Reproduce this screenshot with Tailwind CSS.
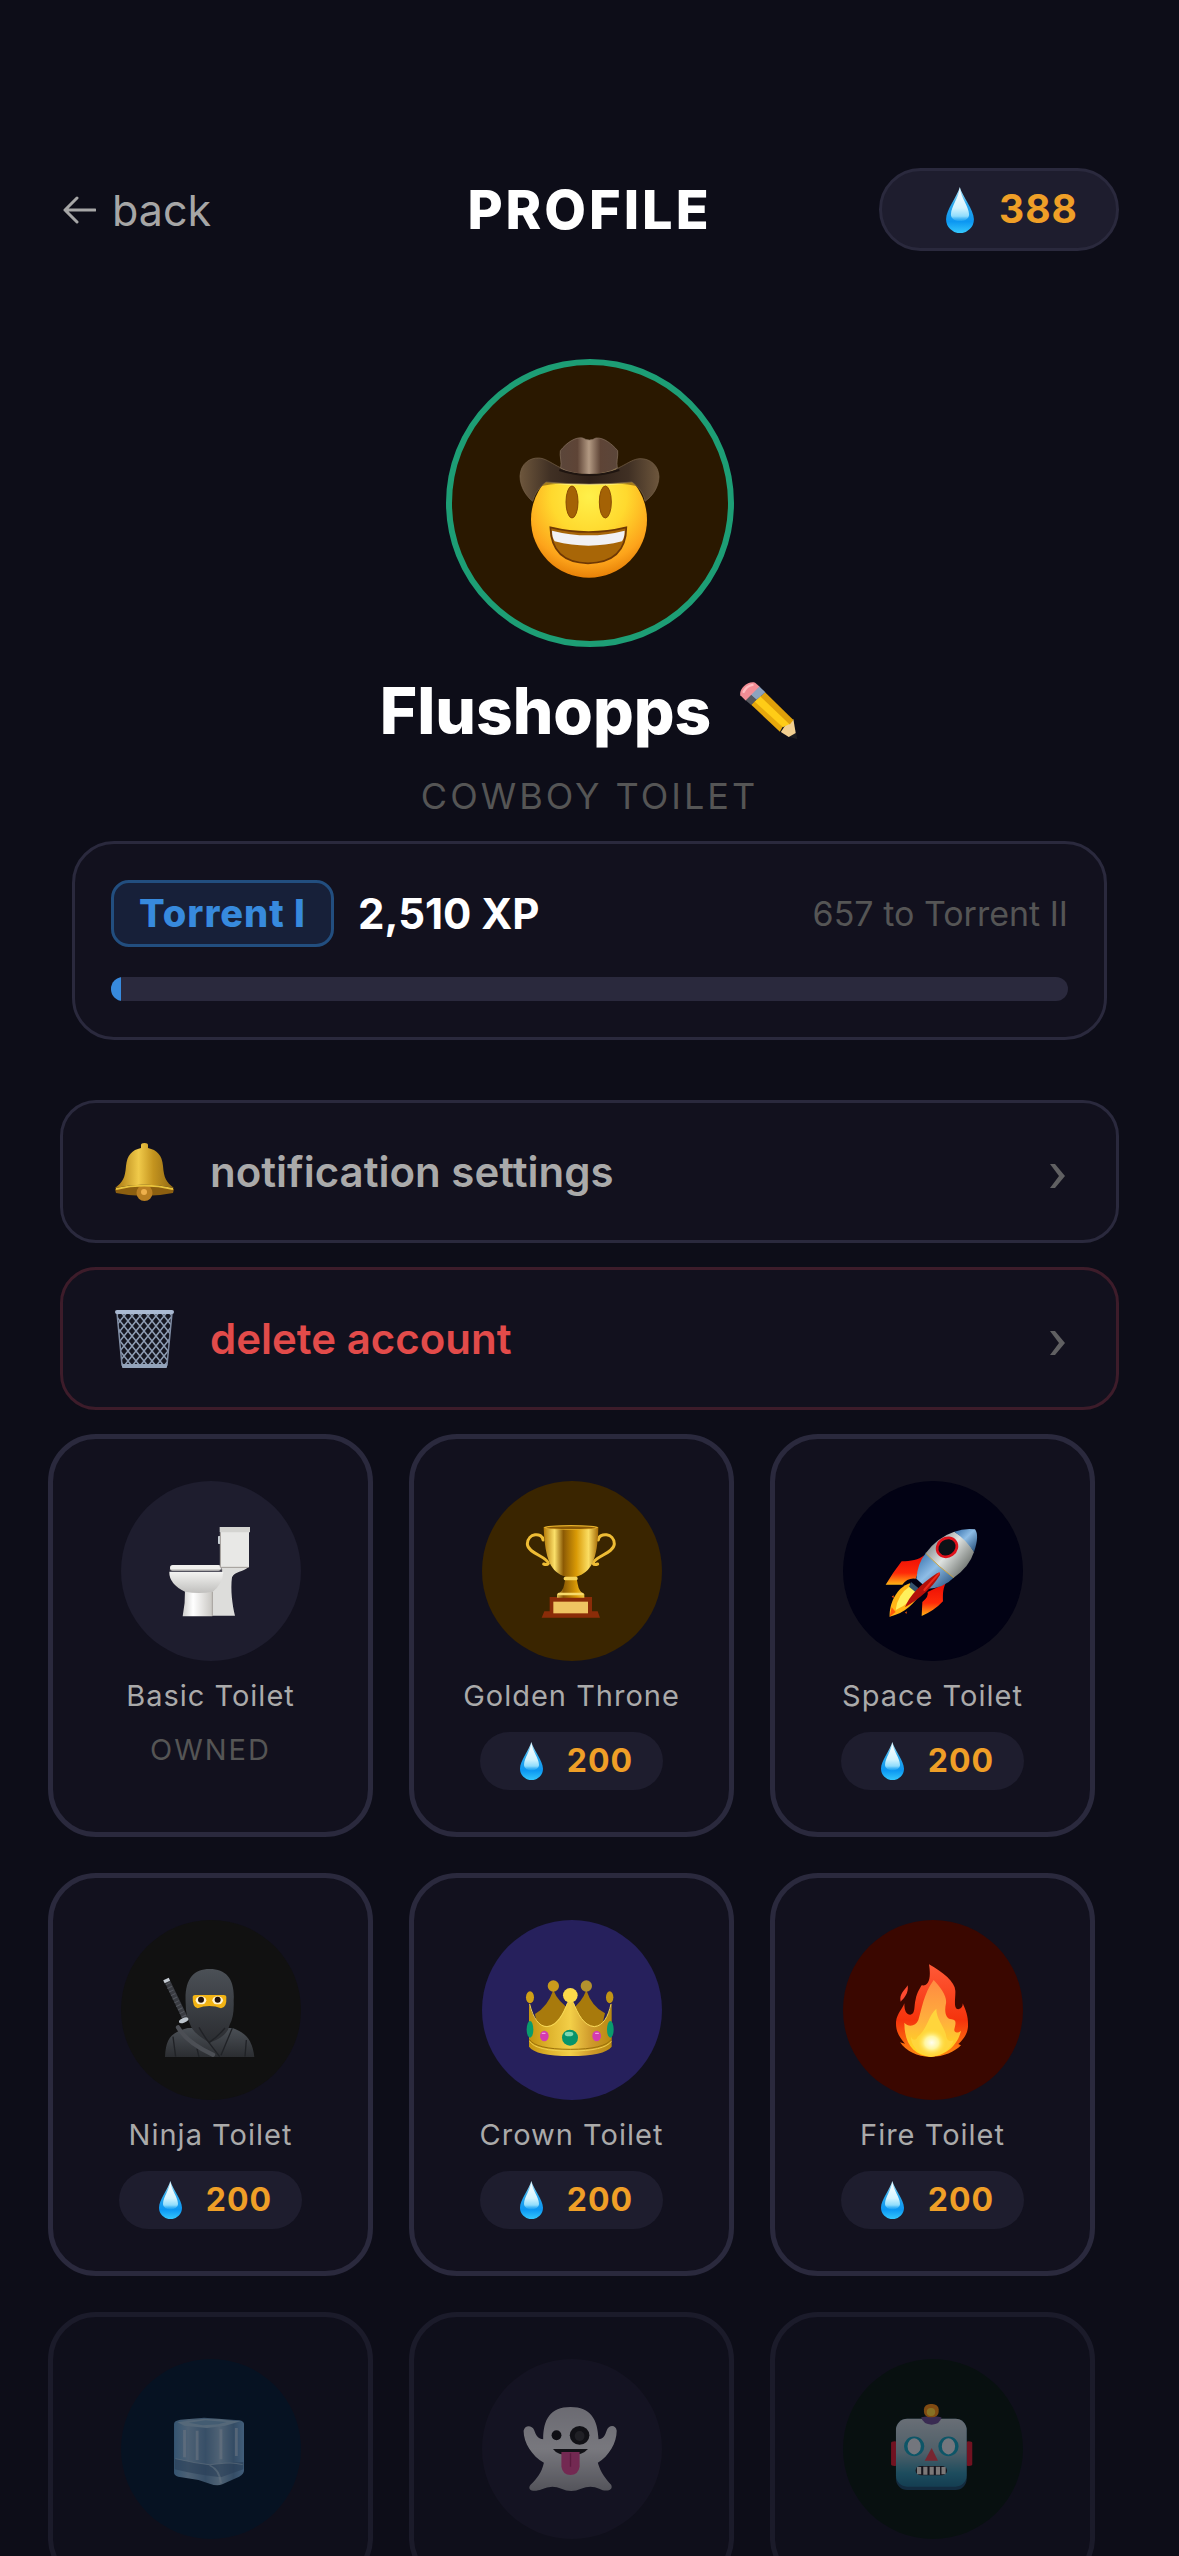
<!DOCTYPE html>
<html lang="en">
<head>
  <meta charset="UTF-8">
  <meta name="viewport" content="width=device-width, initial-scale=1">
  <title>Profile</title>
  <script src="https://cdn.jsdelivr.net/npm/@tailwindcss/browser@4"></script>
</head>
<body class="bg-[#0d0d18] h-screen overflow-hidden font-['Inter',sans-serif] text-white">

  <!-- Shared gradients and the drop icon -->
  <svg class="absolute w-0 h-0" aria-hidden="true">
    <defs>
      <linearGradient id="drop-body" x1="0" y1="0" x2="0" y2="1">
        <stop offset="0" stop-color="#c9f1fd"/><stop offset=".35" stop-color="#2fa9ea"/>
        <stop offset=".75" stop-color="#0c97f2"/><stop offset="1" stop-color="#35c8fd"/>
      </linearGradient>
      <linearGradient id="drop-shine" x1="0" y1="0" x2="0" y2="1">
        <stop offset="0" stop-color="#ffffff"/><stop offset=".6" stop-color="#d3f4fe"/>
        <stop offset=".85" stop-color="#8fdcfc"/><stop offset="1" stop-color="#3fb8f8" stop-opacity=".3"/>
      </linearGradient>
      <radialGradient id="face" cx=".5" cy=".3" r=".72">
        <stop offset="0" stop-color="#fff04a"/><stop offset=".45" stop-color="#ffd92e"/>
        <stop offset=".8" stop-color="#fda41b"/><stop offset="1" stop-color="#e47c05"/>
      </radialGradient>
      <linearGradient id="hat-brim" x1="0" y1="0" x2="1" y2="0">
        <stop offset="0" stop-color="#6d563c"/><stop offset=".22" stop-color="#403024"/>
        <stop offset=".5" stop-color="#2e2018"/><stop offset=".78" stop-color="#403024"/><stop offset="1" stop-color="#6d563c"/>
      </linearGradient>
      <linearGradient id="hat-crown" x1="0" y1="0" x2="1" y2="0">
        <stop offset="0" stop-color="#5b463a"/><stop offset=".3" stop-color="#5e4436"/>
        <stop offset=".5" stop-color="#b39a83"/><stop offset=".7" stop-color="#5e4436"/><stop offset="1" stop-color="#5b463a"/>
      </linearGradient>
      <linearGradient id="gold" x1="0" y1="0" x2="1" y2="0">
        <stop offset="0" stop-color="#b57a08"/><stop offset=".2" stop-color="#fbe06a"/><stop offset=".36" stop-color="#8c5a04"/>
        <stop offset=".6" stop-color="#d99a06"/><stop offset=".82" stop-color="#fbdd62"/><stop offset="1" stop-color="#a56a05"/>
      </linearGradient>
      <linearGradient id="bell" x1="0" y1="0" x2="1" y2="0">
        <stop offset="0" stop-color="#a8760e"/><stop offset=".4" stop-color="#f0ca4a"/>
        <stop offset=".65" stop-color="#c4941f"/><stop offset="1" stop-color="#8f6712"/>
      </linearGradient>
      <linearGradient id="porcelain" x1="0" y1="0" x2="0" y2="1">
        <stop offset="0" stop-color="#f4f4f2"/><stop offset="1" stop-color="#c0bfbd"/>
      </linearGradient>
      <linearGradient id="porcelain-foot" x1="0" y1="0" x2="1" y2="0">
        <stop offset="0" stop-color="#cfcecc"/><stop offset=".35" stop-color="#ffffff"/><stop offset="1" stop-color="#c8c6c2"/>
      </linearGradient>
      <linearGradient id="rocket-hull" gradientUnits="userSpaceOnUse" x1="505" y1="345" x2="605" y2="425">
        <stop offset="0" stop-color="#8b9193"/><stop offset=".45" stop-color="#dfe3e1"/><stop offset="1" stop-color="#777c78"/>
      </linearGradient>
      <linearGradient id="rocket-blue" x1="0" y1="0" x2="1" y2="1">
        <stop offset="0" stop-color="#2f6ba8"/><stop offset=".45" stop-color="#8ebde6"/><stop offset="1" stop-color="#1e4672"/>
      </linearGradient>
      <linearGradient id="fin" x1="0" y1="0" x2="0" y2="1">
        <stop offset="0" stop-color="#ea0c05"/><stop offset=".6" stop-color="#ff2a08"/><stop offset="1" stop-color="#ffb414"/>
      </linearGradient>
      <linearGradient id="ninja" x1="0" y1="0" x2="0" y2="1">
        <stop offset="0" stop-color="#4b5056"/><stop offset="1" stop-color="#2b2d31"/>
      </linearGradient>
      <linearGradient id="crown" x1="0" y1="0" x2="1" y2="0">
        <stop offset="0" stop-color="#c4930f"/><stop offset=".25" stop-color="#dfb42e"/><stop offset=".5" stop-color="#f3cf48"/>
        <stop offset=".75" stop-color="#cf9a2c"/><stop offset="1" stop-color="#b98a10"/>
      </linearGradient>
      <linearGradient id="flame-outer" x1="0" y1="0" x2="0" y2="1">
        <stop offset="0" stop-color="#ff5a38"/><stop offset=".6" stop-color="#f5330c"/><stop offset="1" stop-color="#ff8a10"/>
      </linearGradient>
      <linearGradient id="flame-mid" x1="0" y1="0" x2="0" y2="1">
        <stop offset="0" stop-color="#ff8a42"/><stop offset=".55" stop-color="#ffb13c"/><stop offset="1" stop-color="#ffe01c"/>
      </linearGradient>
      <radialGradient id="flame-core">
        <stop offset="0" stop-color="#fffef0"/><stop offset=".45" stop-color="#fff6a0"/><stop offset="1" stop-color="#ffd826" stop-opacity="0"/>
      </radialGradient>
      <linearGradient id="ice" x1="0" y1="0" x2="1" y2="0">
        <stop offset="0" stop-color="#5d9bca"/><stop offset=".2" stop-color="#8fb6d2"/><stop offset=".45" stop-color="#6290b6"/>
        <stop offset=".65" stop-color="#93b8d1"/><stop offset=".85" stop-color="#5c8bb2"/><stop offset="1" stop-color="#76aedb"/>
      </linearGradient>
      <linearGradient id="ghost" x1="0" y1="0" x2="0" y2="1">
        <stop offset="0" stop-color="#c9c8cc"/><stop offset=".5" stop-color="#e2e2e3"/><stop offset="1" stop-color="#9a9a9d"/>
      </linearGradient>
      <linearGradient id="robot" x1="0" y1="0" x2="0" y2="1">
        <stop offset="0" stop-color="#c4cfd3"/><stop offset=".5" stop-color="#8fb0b8"/><stop offset=".8" stop-color="#2e8ca3"/><stop offset="1" stop-color="#1b6f8c"/>
      </linearGradient>
      <pattern id="mesh" width="8" height="10" patternUnits="userSpaceOnUse">
        <path d="M0 0L8 10M8 0L0 10" stroke="#8e9db4" stroke-width="1.5"/>
      </pattern>
      <symbol id="drop" viewBox="360 942 69 114">
        <path fill="url(#drop-body)" d="M394 942C388 965 360 998 360 1022A34.500 34.500 0 0 0 429 1022C429 998 400 965 394 942Z"/>
        <path fill="url(#drop-shine)" d="M394 946C391 968 373 990 372 1010C372 1032 417 1032 417 1010C416 990 397 968 394 946Z"/>
      </symbol>
    </defs>
  </svg>

  <!-- Header -->
  <header class="mt-[168px] px-[60px] grid grid-cols-3 items-center">
    <a href="#" class="justify-self-start flex items-center gap-4 text-[43px] leading-[54px] text-[#a6a6a6]">
      <svg class="w-9 h-9" viewBox="0 0 36 36" fill="none" stroke="currentColor" stroke-width="3" stroke-linecap="round" stroke-linejoin="round" aria-hidden="true"><path d="M35 18H5M17 6L5 18L17 30"/></svg>back
    </a>
    <h1 class="justify-self-center text-[54px] leading-[60px] font-extrabold tracking-[3px]">PROFILE</h1>
    <div class="justify-self-end h-[83px] pl-16 pr-[38px] flex items-center gap-[25px] rounded-full border-3 border-[#2a293d] bg-[#1e1d2e] text-[39px] font-bold tracking-[1px] text-[#ef9f27]">
      <svg class="w-7 h-[46px]" aria-hidden="true"><use href="#drop"/></svg>388
    </div>
  </header>

  <main>
    <!-- Avatar and name -->
    <section class="mt-[108px] flex flex-col items-center">
      <div class="size-72 rounded-full border-6 border-[#1d9e75] bg-[#2a1800]">
        <svg class="size-full" viewBox="96 75 828 828" aria-label="Cowboy">
          <circle cx="507" cy="539" r="174" fill="url(#face)"/>
          <path fill="#6b4a10" opacity=".6" d="M352 440Q508 412 662 440L650 400H365Z"/>
          <path fill="#fff27a" d="M392 431H622Q508 440 392 431Z"/>
          <ellipse cx="456" cy="486" rx="18" ry="48" fill="#a46205" stroke="#8a4b04" stroke-width="3"/>
          <ellipse cx="556" cy="486" rx="18" ry="48" fill="#a46205" stroke="#8a4b04" stroke-width="3"/>
          <path fill="#a86607" stroke="#6f3804" stroke-width="5" d="M391 562Q506 590 619 562Q618 668 504 670Q394 668 391 562Z"/>
          <path fill="#f1f1f4" d="M396 572Q506 600 614 572Q614 592 606 604Q506 630 404 604Q396 592 396 572Z"/>
          <path fill="url(#hat-brim)" stroke="#7a654d" stroke-width="2" d="M338 484C318 468 300 440 300 408C302 370 330 353 356 354C392 355 420 402 508 404C596 402 624 357 660 356C690 355 716 376 717 410C716 442 698 468 675 484C672 460 655 440 636 426Q508 438 378 426C360 440 345 458 338 484Z"/>
          <path fill="url(#hat-crown)" stroke="#8a7462" stroke-width="2" d="M422 384C426 366 418 348 421 332C440 308 466 290 488 294Q508 306 528 294C552 292 576 312 593 332C595 350 588 366 592 384Q560 402 508 403Q452 402 422 384Z"/>
          <path fill="none" stroke="#1f1510" stroke-width="6" d="M418 390Q508 420 598 390"/>
        </svg>
      </div>
      <div class="mt-6 h-20 flex items-center gap-7">
        <h2 class="text-[64px] leading-20 font-extrabold">Flushopps</h2>
        <button type="button" aria-label="Edit name">
          <svg class="w-[60px] h-[60px]" viewBox="1131 60 182 182" aria-hidden="true">
            <path fill="#1c1c20" d="M1308 237L1280 228L1302 207Z"/>
            <path fill="#f2cf91" d="M1258 215L1282 230L1303 218L1296 176L1278 184Z"/>
            <path fill="#e7a80c" d="M1168 132L1255 214L1264 198L1180 118Z"/>
            <path fill="#ffcc17" d="M1178 122L1264 200L1286 190L1198 104Z"/>
            <path fill="#dfa00a" d="M1196 107L1285 192L1296 178L1210 94Z"/>
            <path fill="#56585f" d="M1150 118L1168 133L1184 117L1166 101Z"/>
            <path fill="#8da3bd" d="M1166 101L1184 117L1211 94L1192 76Z"/>
            <path fill="#f28d95" d="M1135 103C1130 84 1158 58 1180 65L1193 77L1151 119Z"/>
            <path fill="none" stroke="#ffbcc0" stroke-width="7" stroke-linecap="round" d="M1145 93Q1154 75 1172 72"/>
          </svg>
        </button>
      </div>
      <p class="mt-[21px] text-[36px] leading-12 tracking-[3px] text-[#555]">COWBOY TOILET</p>
    </section>

    <!-- XP progress -->
    <section class="mt-[21px] mx-[72px] p-9 rounded-[42px] border-3 border-[#2a293d] bg-[#12111e]">
      <div class="flex items-center">
        <span class="h-[67px] px-[25px] flex items-center rounded-[18px] border-3 border-[#224e7f] bg-[#172039] text-[38px] font-extrabold tracking-[1px] text-[#378add]">Torrent I</span>
        <span class="ml-6 text-[42px] leading-12 font-bold">2,510 XP</span>
        <span class="ml-auto text-[34px] leading-10 text-[#555]">657 to Torrent II</span>
      </div>
      <div class="mt-[30px] h-6 rounded-xl overflow-hidden bg-[#2a293d]">
        <div class="h-full bg-[#378add]" style="width: 1%"></div>
      </div>
    </section>

    <!-- Account actions -->
    <nav class="mt-[60px] mx-[60px] flex flex-col gap-6 text-[42px] font-semibold">
      <a href="#" class="h-[143px] px-12 flex items-center gap-[33px] rounded-[36px] border-3 border-[#2a293d] bg-[#12111e] text-[#aaa]">
        <svg class="size-[66px]" viewBox="111 1138 66 66" aria-hidden="true">
          <path fill="#8c5f10" d="M115 1188Q144 1179 174 1188L173 1192Q144 1198 116 1192Z"/>
          <ellipse cx="144.500" cy="1192" rx="8" ry="8" fill="#b97f22"/>
          <path fill="url(#bell)" d="M141 1144Q141 1142 144.500 1142Q148 1142 148 1144V1147C157 1149 162 1154 163 1165C164 1177 166 1181 174 1187Q144 1180 115 1187C123 1181 125 1177 126 1165C127 1154 132 1149 141 1147Z"/>
          <path fill="none" stroke="#e9c33c" stroke-width="2" d="M116 1188Q144 1181 173 1188"/>
          <circle cx="144" cy="1191" r="3" fill="#eeb04c"/>
        </svg>
        <span>notification settings</span>
        <svg class="ml-auto w-[18px] h-8" viewBox="0 0 18 32" fill="#606062" aria-hidden="true"><path d="M0 8H5L15 20L5 32H0L9 20Z"/></svg>
      </a>
      <a href="#" class="h-[143px] px-12 flex items-center gap-[33px] rounded-[36px] border-3 border-[#3d1c2a] bg-[#12111e] text-[#e24b4a]">
        <svg class="size-[66px]" viewBox="111 1305 66 66" aria-hidden="true">
          <path fill="#161722" d="M117 1312H172L167 1364H122Z"/>
          <path fill="url(#mesh)" stroke="#7f8ca3" stroke-width="1.500" d="M117 1312H172L167 1364H122Z"/>
          <rect x="115" y="1309" width="59" height="4" rx="2" fill="#a9b9d2"/>
          <rect x="122" y="1363" width="45" height="4" rx="1" fill="#93a3ba"/>
        </svg>
        <span>delete account</span>
        <svg class="ml-auto w-[18px] h-8" viewBox="0 0 18 32" fill="#606062" aria-hidden="true"><path d="M0 8H5L15 20L5 32H0L9 20Z"/></svg>
      </a>
    </nav>

    <!-- Toilet shop -->
    <section class="mt-6 pl-12 pr-[84px] grid grid-cols-3 gap-9 text-[29px] leading-9 text-[#aaa]">
      <button type="button" class="p-[42px] flex flex-col items-center rounded-[48px] border-5 border-[#2a293d] bg-[#12111e]">
        <svg class="size-45 rounded-full bg-[#1e1d2e]" viewBox="240 153 540 540" aria-hidden="true">
          <path fill="#dddddb" d="M540 412H622C606 426 582 424 573 442C568 480 574 525 582 557H512V486Q536 465 545 430Z"/>
          <path fill="#e8e8e6" d="M538 306H624V412H538Z"/>
          <path fill="#d4d4d1" d="M536 291H627V307H536Z"/>
          <rect x="531" y="318" width="7" height="24" rx="2" fill="#c9d0d6"/>
          <path fill="url(#porcelain-foot)" d="M432 480H514V559H425Q433 520 432 480Z"/>
          <path fill="url(#porcelain)" d="M385 425Q384 462 432 485Q474 493 515 485Q545 462 547 425Z"/>
          <rect x="387" y="405" width="153" height="17" rx="8" fill="#f1f0ee"/>
          <path fill="none" stroke="#8f8c88" stroke-width="2" d="M386 420H545"/>
          <path fill="none" stroke="#a5a19c" stroke-width="3" d="M514 486V558M538 308V412H622"/>
        </svg>
        <span class="mt-[17px] tracking-[1px]">Basic Toilet</span>
        <span class="mt-[18px] tracking-[2px] text-[#555]">OWNED</span>
      </button>

      <button type="button" class="p-[42px] flex flex-col items-center rounded-[48px] border-5 border-[#2a293d] bg-[#12111e]">
        <svg class="size-45 rounded-full bg-[#3a2500]" viewBox="243 153 540 540" aria-hidden="true">
          <g fill="none" stroke="#eebc34" stroke-width="9" stroke-linecap="round">
            <path d="M426 330C424 306 380 308 379 342C380 370 440 380 442 400Q438 406 428 402"/>
            <path d="M592 330C594 306 640 308 640 342C638 370 580 380 576 400Q580 406 590 402"/>
          </g>
          <path fill="#8a2c08" d="M446 501H573V544H590L597 563H422L430 544H446Z"/>
          <rect x="457" y="515" width="104" height="35" fill="#efc462"/>
          <path fill="url(#gold)" d="M428 292H592C590 390 570 428 526 440L530 462Q534 486 550 492V503H468V492Q486 486 490 462L494 440C450 428 432 390 428 292Z"/>
          <ellipse cx="510" cy="292" rx="82" ry="7" fill="#e5b02a"/>
          <ellipse cx="510" cy="293" rx="74" ry="4" fill="#8a5905"/>
          <rect x="488" y="440" width="42" height="11" rx="5" fill="#f6d45a"/>
          <rect x="470" y="488" width="78" height="8" rx="4" fill="#f7da6c"/>
        </svg>
        <span class="mt-[17px] tracking-[1px]">Golden Throne</span>
        <span class="mt-[18px] h-[58px] pl-10 pr-[30px] flex items-center gap-6 rounded-full bg-[#1e1d2e] text-[32px] font-bold tracking-[1px] text-[#ef9f27]">
          <svg class="w-[23px] h-[38px]" aria-hidden="true"><use href="#drop"/></svg>200
        </span>
      </button>

      <button type="button" class="p-[42px] flex flex-col items-center rounded-[48px] border-5 border-[#2a293d] bg-[#12111e]">
        <svg class="size-45 rounded-full bg-[#020214]" viewBox="246 153 540 540" aria-hidden="true">
          <path fill="#ffb516" d="M386 560C384 520 408 472 446 460L478 486C466 518 430 550 386 560Z"/>
          <path fill="#fff05c" d="M404 540Q410 492 448 468L466 482Q450 520 404 540Z"/>
          <path fill="#ff5a0a" d="M386 560L392 532L404 546ZM392 500l6-4v8zM432 548l5-4v7z"/>
          <path fill="url(#fin)" d="M490 376C472 390 450 394 422 394Q394 430 374 464L424 464Q440 442 464 446Z"/>
          <path fill="url(#fin)" d="M554 460C544 480 546 500 546 514Q520 542 482 558L484 516Q504 500 500 486Z"/>
          <path fill="url(#rocket-blue)" d="M494 370Q470 400 466 446L500 476Q548 474 578 443Z"/>
          <path fill="url(#rocket-hull)" d="M494 370Q528 322 580 305Q622 330 639 366Q624 412 578 443Q534 412 494 370Z"/>
          <path fill="url(#rocket-blue)" d="M580 305Q610 294 642 298Q656 316 639 366Q614 328 580 305Z"/>
          <path fill="none" stroke="#c9a33e" stroke-width="3" d="M494 370Q534 412 578 443"/>
          <path fill="#34546e" d="M450 456L472 474L466 488L444 470Z"/>
          <path fill="#b3100a" d="M432 532Q452 480 528 430Q540 424 536 436Q506 488 432 532Z"/>
          <path fill="none" stroke="#ee2a1a" stroke-width="6" stroke-linecap="round" d="M534 430Q510 456 490 480"/>
          <ellipse cx="558" cy="352" rx="31" ry="27" transform="rotate(-35 558 352)" fill="#0c1116" stroke="#e0121b" stroke-width="8"/>
        </svg>
        <span class="mt-[17px] tracking-[1px]">Space Toilet</span>
        <span class="mt-[18px] h-[58px] pl-10 pr-[30px] flex items-center gap-6 rounded-full bg-[#1e1d2e] text-[32px] font-bold tracking-[1px] text-[#ef9f27]">
          <svg class="w-[23px] h-[38px]" aria-hidden="true"><use href="#drop"/></svg>200
        </span>
      </button>

      <button type="button" class="p-[42px] flex flex-col items-center rounded-[48px] border-5 border-[#2a293d] bg-[#12111e]">
        <svg class="size-45 rounded-full bg-[#111]" viewBox="240 150 540 540" aria-hidden="true">
          <path stroke="#3a3c42" stroke-width="17" d="M380 336L432 444"/>
          <path stroke="#55585f" stroke-width="15" stroke-dasharray="3 9" d="M380 340L430 442"/>
          <path stroke="#c6ccd4" stroke-width="18" d="M375 327L379 336"/>
          <path fill="url(#ninja)" d="M372 561C374 500 396 486 440 474H574C618 490 634 512 640 561Z"/>
          <path fill="url(#ninja)" d="M434 400C430 330 455 297 506 297C558 297 582 330 578 392Q580 440 566 464Q560 500 506 518Q456 490 448 464Q434 440 434 400Z"/>
          <path fill="#f2b313" d="M455 380Q456 375 462 375H548Q556 375 556 382Q558 414 540 415Q524 408 505 408Q486 408 470 415Q454 412 455 380Z"/>
          <ellipse cx="480" cy="391" rx="16" ry="12" fill="#fff3cf"/>
          <ellipse cx="530" cy="391" rx="16" ry="12" fill="#fff3cf"/>
          <circle cx="480" cy="389" r="9" fill="#22120a"/>
          <circle cx="530" cy="389" r="9" fill="#22120a"/>
          <path fill="none" stroke="#202226" stroke-width="4" d="M474 472Q490 500 504 518Q530 500 552 474M504 518L536 560M574 474L540 556M404 560L396 500M612 560L616 510M474 561L468 536"/>
          <path fill="none" stroke="#4c4f55" stroke-width="13" stroke-linecap="round" d="M411 472Q440 520 516 554"/>
          <ellipse cx="428" cy="451" rx="15" ry="7" transform="rotate(-22 428 451)" fill="#bcc4cc"/>
        </svg>
        <span class="mt-[17px] tracking-[1px]">Ninja Toilet</span>
        <span class="mt-[18px] h-[58px] pl-10 pr-[30px] flex items-center gap-6 rounded-full bg-[#1e1d2e] text-[32px] font-bold tracking-[1px] text-[#ef9f27]">
          <svg class="w-[23px] h-[38px]" aria-hidden="true"><use href="#drop"/></svg>200
        </span>
      </button>

      <button type="button" class="p-[42px] flex flex-col items-center rounded-[48px] border-5 border-[#2a293d] bg-[#12111e]">
        <svg class="size-45 rounded-full bg-[#26205c]" viewBox="243 150 540 540" aria-hidden="true">
          <path fill="#a87a0c" d="M402 432Q440 410 457 360Q470 395 510 420Q544 395 556 360Q572 410 612 430L600 480H410Z"/>
          <circle cx="457" cy="348" r="17" fill="#c99a1c"/>
          <circle cx="556" cy="348" r="17" fill="#b4922e"/>
          <path fill="url(#crown)" d="M384 398C392 440 412 468 438 468C468 466 486 430 500 396H517C530 430 548 466 580 468C606 466 624 440 632 398L632 530Q610 558 508 558Q404 558 384 530Z"/>
          <circle cx="508" cy="376" r="22" fill="#fbd94a"/>
          <ellipse cx="387" cy="382" rx="12" ry="18" fill="#cf9f16"/>
          <ellipse cx="626" cy="382" rx="11" ry="18" fill="#c09416"/>
          <path fill="none" stroke="#f5d857" stroke-width="3" d="M386 402C396 444 414 470 438 470C470 468 488 430 500 398M517 398C530 430 548 468 580 470C606 468 622 440 630 402"/>
          <path fill="none" stroke="#9a700b" stroke-width="3" d="M385 508Q404 538 508 538Q610 538 631 508"/>
          <path fill="none" stroke="#f0d050" stroke-width="3" d="M386 514Q404 543 508 543Q610 543 631 514"/>
          <circle cx="507" cy="503" r="24" fill="#08946a"/>
          <ellipse cx="504" cy="492" rx="13" ry="7" fill="#7fd8b0"/>
          <ellipse cx="387" cy="478" rx="10" ry="25" fill="#099b6d"/>
          <ellipse cx="628" cy="478" rx="10" ry="25" fill="#099b6d"/>
          <ellipse cx="430" cy="498" rx="13" ry="16" fill="#d43bb0"/>
          <ellipse cx="587" cy="498" rx="13" ry="16" fill="#d43bb0"/>
          <path stroke="#f39be0" stroke-width="4" stroke-linecap="round" d="M424 490H432M584 490H592"/>
        </svg>
        <span class="mt-[17px] tracking-[1px]">Crown Toilet</span>
        <span class="mt-[18px] h-[58px] pl-10 pr-[30px] flex items-center gap-6 rounded-full bg-[#1e1d2e] text-[32px] font-bold tracking-[1px] text-[#ef9f27]">
          <svg class="w-[23px] h-[38px]" aria-hidden="true"><use href="#drop"/></svg>200
        </span>
      </button>

      <button type="button" class="p-[42px] flex flex-col items-center rounded-[48px] border-5 border-[#2a293d] bg-[#12111e]">
        <svg class="size-45 rounded-full bg-[#3a0700]" viewBox="246 150 540 540" aria-hidden="true">
          <path fill="#ff4a30" d="M440 346C444 370 428 386 419 395C414 372 430 362 440 346Z"/>
          <path fill="url(#flame-outer)" d="M504 283C546 306 582 336 583 362C584 386 576 418 592 418C602 416 606 408 605 400C616 424 622 440 621 470C618 500 600 514 592 522L600 526C580 546 550 560 508 561C468 560 436 544 417 517L432 521C414 500 404 484 405 456C408 430 424 418 430 400C430 424 436 434 448 434C464 432 458 410 464 388C468 368 476 356 482 346C500 350 512 330 504 283Z"/>
          <path fill="url(#flame-mid)" d="M518 330C540 354 558 378 555 400C550 422 552 446 572 448C588 450 584 460 580 478C578 490 592 490 600 482C592 520 560 556 510 560C456 556 430 520 430 458C442 472 464 470 472 450C482 420 488 370 518 330Z"/>
          <path fill="#ffd53c" d="M526 416C526 450 552 470 556 500C562 520 574 510 578 512C566 540 540 558 510 560C480 558 448 530 450 500C456 514 466 510 470 500C500 476 500 440 526 416Z"/>
          <ellipse cx="512" cy="518" rx="46" ry="42" fill="url(#flame-core)"/>
        </svg>
        <span class="mt-[17px] tracking-[1px]">Fire Toilet</span>
        <span class="mt-[18px] h-[58px] pl-10 pr-[30px] flex items-center gap-6 rounded-full bg-[#1e1d2e] text-[32px] font-bold tracking-[1px] text-[#ef9f27]">
          <svg class="w-[23px] h-[38px]" aria-hidden="true"><use href="#drop"/></svg>200
        </span>
      </button>

      <!-- Locked toilets -->
      <button type="button" disabled aria-label="Ice" class="p-[42px] flex flex-col items-center rounded-[48px] border-5 border-[#2a293d] bg-[#12111e] opacity-50">
        <svg class="size-45 rounded-full bg-[#00182d]" viewBox="242 189 540 540" aria-hidden="true">
          <g transform="scale(2.1 1)">
            <path fill="url(#ice)" d="M191 384Q191 374 200 371L234 365L284 373Q291 376 291 384V522Q291 534 284 542L260 565Q252 571 242 563L226 552L197 542Q191 538 191 530Z"/>
            <path fill="#9cc3da" d="M196 379L234 368L286 376L264 389L238 396L206 389Z"/>
            <path fill="#6b9fc4" opacity=".7" d="M212 380L236 373L266 378L254 385L232 388Z"/>
            <path fill="#456f95" opacity=".6" d="M192 488Q216 498 240 506Q266 500 290 498V520L258 544Q222 536 192 520Z"/>
            <path fill="none" stroke="#b5d3e5" stroke-width="3" opacity=".6" d="M193 488Q216 500 242 506L262 502M242 508Q256 520 258 562M262 502Q276 498 289 506"/>
            <path fill="none" stroke="#c4dbe9" stroke-width="4" opacity=".6" d="M206 402V484M224 404V492M258 400V490M280 396V480"/>
          </g>
        </svg>
      </button>
      <button type="button" disabled aria-label="Ghost" class="p-[42px] flex flex-col items-center rounded-[48px] border-5 border-[#2a293d] bg-[#12111e] opacity-50">
        <svg class="size-45 rounded-full bg-[#1c1a2c]" viewBox="1320 189 540 540" aria-hidden="true">
          <g transform="scale(2.1 1)">
            <path fill="url(#ghost)" d="M717 500C700 480 688 440 688 404C690 386 700 388 703 402C706 420 709 428 716 430C716 370 726 333 755 333C784 333 794 370 795 430C802 428 804 420 807 402C810 386 820 386 821 404C821 440 810 480 794 500C798 530 806 550 813 566C817 582 806 590 796 578Q784 566 770 578Q756 592 742 578Q728 566 714 580C702 590 692 582 698 566C706 550 714 530 717 500Z"/>
            <ellipse cx="735" cy="418" rx="7" ry="15" fill="#111"/>
            <ellipse cx="768" cy="418" rx="14" ry="28" fill="#151515"/>
            <ellipse cx="768" cy="420" rx="7" ry="15" fill="#333"/>
            <path fill="#151515" d="M730 459H780Q772 478 755 478Q736 478 730 459Z"/>
            <path fill="#d9468c" d="M742 468H768V512Q766 537 755 537Q744 537 742 512Z"/>
            <path stroke="#a82b66" stroke-width="2" d="M755 472V512"/>
          </g>
        </svg>
      </button>
      <button type="button" disabled aria-label="Robot" class="p-[42px] flex flex-col items-center rounded-[48px] border-5 border-[#2a293d] bg-[#12111e] opacity-50">
        <svg class="size-45 rounded-full bg-[#04140a]" viewBox="2401 189 540 540" aria-hidden="true">
          <g transform="scale(2.1 1)">
            <rect x="1212" y="436" width="10" height="74" rx="5" fill="#d5182a"/>
            <rect x="1318" y="436" width="10" height="74" rx="5" fill="#d5182a"/>
            <rect x="1219" y="368" width="101" height="214" rx="16" ry="34" fill="#1a4a66"/>
            <rect x="1219" y="368" width="101" height="204" rx="16" ry="34" fill="url(#robot)"/>
            <path fill="#664a8c" d="M1255 364Q1270 358 1284 364Q1282 386 1270 386Q1258 386 1255 364Z"/>
            <rect x="1259" y="324" width="21" height="40" rx="9" ry="16" fill="#f28a0e"/>
            <ellipse cx="1269" cy="348" rx="6" ry="12" fill="#ffd530"/>
            <ellipse cx="1245" cy="451" rx="12" ry="27" fill="#d9dfe2" stroke="#0e9cb5" stroke-width="5"/>
            <ellipse cx="1294" cy="451" rx="12" ry="27" fill="#d9dfe2" stroke="#0e9cb5" stroke-width="5"/>
            <path fill="#e0404a" d="M1270 456L1279 494H1260Z"/>
            <rect x="1247" y="510" width="45" height="28" rx="8" ry="14" fill="#1c1c20"/>
            <path stroke="#e9e2d8" stroke-width="6" d="M1252 513V535M1261 512V536M1270 512V536M1279 512V536M1287 513V535"/>
          </g>
        </svg>
      </button>
    </section>
  </main>

</body>
</html>
